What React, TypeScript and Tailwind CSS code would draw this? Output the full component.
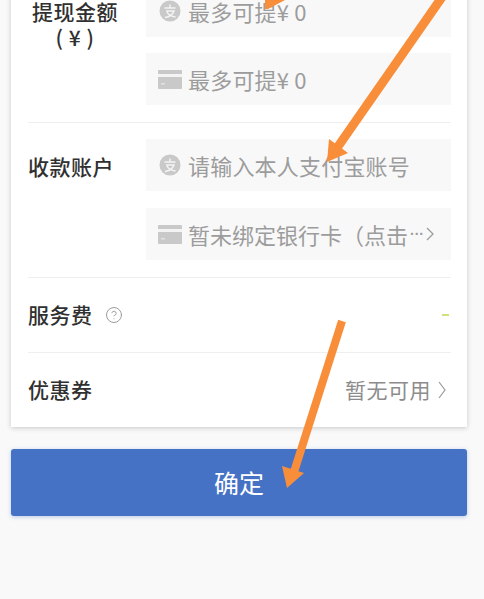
import type { ReactNode } from "react";
import { CircleHelp } from "lucide-react";

function AlipayIcon() {
  return (
    <span className="flex w-6 shrink-0 justify-center">
      <svg viewBox="0 0 22 22" className="h-[22px] w-[22px]">
        <circle cx="11" cy="11" r="10.5" fill="#c9c9c9" />
        <path
          d="M5.5 8h11M11 4.500V8M7 11h8c-1.500 4-5 6-9 6.500M8 12c1.500 3 4.500 4.500 8.500 5"
          fill="none"
          stroke="#f4f4f4"
          strokeWidth="1.500"
        />
      </svg>
    </span>
  );
}

function CardIcon() {
  return (
    <svg viewBox="0 0 24 19" className="h-[19px] w-6 shrink-0">
      <rect width="24" height="19" rx="1" fill="#c9c9c9" />
      <rect y="4" width="24" height="3" fill="#f4f4f4" />
      <rect x="3" y="13" width="4" height="1.500" fill="#e2e2e2" />
    </svg>
  );
}

function Field({ icon, children }: { icon: ReactNode; children: ReactNode }) {
  return (
    <div className="flex h-[52px] items-center gap-[6px] bg-[#f8f8f8] pl-3 text-[22px] tracking-[0.2px] text-[#9c9c9c]">
      {icon}
      {children}
    </div>
  );
}

export default function App() {
  return (
    <div
      className="relative h-[599px] overflow-hidden bg-[#f9f9f9] text-[#303030]"
      style={{ fontFamily: '"Noto Sans CJK SC", "Liberation Sans", sans-serif' }}
    >
      <div className="-mt-[32px] ml-[11px] w-[456px] bg-white pl-[17px] pr-4 shadow-[0_1px_5px_rgba(0,0,0,0.2)]">
        <div className="flex border-b border-[#efefef] py-[17px]">
          <div className="w-[118px] shrink-0 pr-[24px] pt-[13px] text-center text-[21px] font-medium leading-[26px] tracking-[0.5px]">
            提现金额
            <br />( ¥ )
          </div>
          <div className="flex min-w-0 flex-1 flex-col gap-4">
            <Field icon={<AlipayIcon />}>最多可提¥ 0</Field>
            <Field icon={<CardIcon />}>最多可提¥ 0</Field>
          </div>
        </div>

        <div className="flex border-b border-[#efefef] pb-[17px] pt-4">
          <div className="w-[118px] shrink-0 pt-[12px] text-[21px] font-medium leading-[30px] tracking-[0.5px]">
            收款账户
          </div>
          <div className="flex min-w-0 flex-1 flex-col gap-[17px]">
            <Field icon={<AlipayIcon />}>请输入本人支付宝账号</Field>
            <Field icon={<CardIcon />}>
              <span className="flex items-center whitespace-nowrap tracking-normal">
                暂未绑定银行卡（点击
                <span className="ml-[2px] font-['Liberation_Sans'] text-[14px] font-bold leading-none">···</span>
                <svg viewBox="0 0 8 14" className="ml-[2px] h-[14px] w-2">
                  <path d="M1 1l6 6-6 6" fill="none" stroke="currentColor" strokeWidth="1.300" />
                </svg>
              </span>
            </Field>
          </div>
        </div>

        <div className="flex h-[75px] items-center justify-between border-b border-[#efefef]">
          <div className="flex items-center gap-3 text-[21px] font-medium tracking-[0.5px]">
            服务费
            <CircleHelp className="h-[18px] w-[18px] text-[#999]" strokeWidth={1.3} />
          </div>
          <span className="mr-[2px] h-[2px] w-[7px] bg-[#d3e07a]" />
        </div>

        <div className="flex h-[74px] items-center justify-between">
          <span className="text-[21px] font-medium tracking-[0.5px]">优惠券</span>
          <div className="flex items-center gap-[7px] pr-[5px] text-[21px] tracking-[0.5px] text-[#8c8c8c]">
            暂无可用
            <svg viewBox="0 0 8 18" className="h-[18px] w-2 text-[#999]">
              <path d="M1 1l6 8-6 8" fill="none" stroke="currentColor" strokeWidth="1.200" />
            </svg>
          </div>
        </div>
      </div>

      <button
        type="button"
        className="ml-[11px] mt-[22px] flex h-[67px] w-[456px] items-center justify-center rounded-[3px] bg-[#4672c6] text-[25px] text-white shadow-[0_1px_4px_rgba(70,114,198,0.35)]"
      >
        确定
      </button>

      {/* orange arrows drawn on top of the screenshot */}
      <svg viewBox="0 0 484 599" className="absolute inset-0 h-full w-full">
        <polygon points="265,0 285,0 268,9 265,9" fill="#f98e3a" />
        <path d="M443.500 -5L337 148" stroke="#f98e3a" strokeWidth="9" />
        <polygon points="327,162 329,139 348,153" fill="#f98e3a" />
        <path d="M342 321L294 472" stroke="#f98e3a" strokeWidth="8" />
        <polygon points="287,488 282,466 304,473" fill="#f98e3a" />
      </svg>
    </div>
  );
}
